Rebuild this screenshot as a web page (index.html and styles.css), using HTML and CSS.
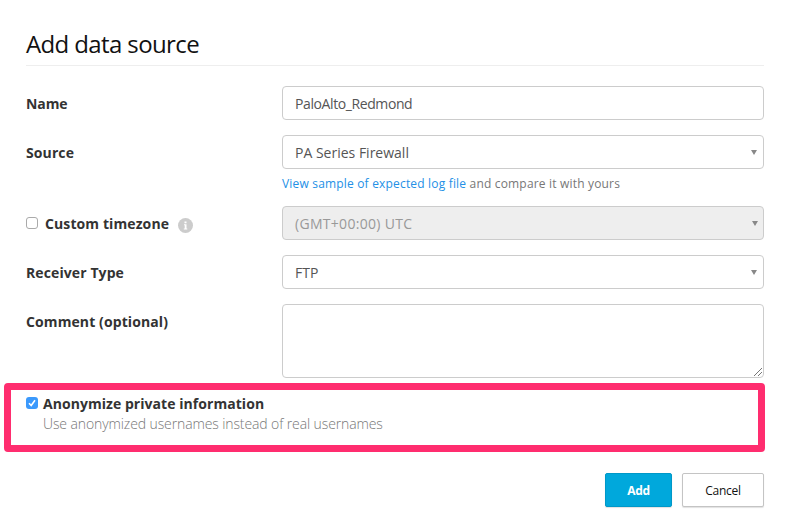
FILE: index.html
```html
<!DOCTYPE html>
<html lang="en">
<head>
<meta charset="utf-8">
<title>Add data source</title>
<link rel="stylesheet" href="styles.css">
</head>
<body>
<main class="dialog">
  <h1 class="title">Add data source</h1>
  <form class="form">
    <div class="row"><div class="label"><span class="w-name">Name</span></div><div class="control"><span class="w-palo">PaloAlto_Redmond</span></div></div>
    <div class="row source"><div class="label"><span>Source</span></div><div class="field"><div class="control"><span>PA Series Firewall</span><i class="arrow"></i></div><p class="hint"><a>View sample of expected log file</a> and compare it with yours</p></div></div>
    <div class="row"><div class="label"><i class="check"></i><span>Custom timezone</span><i class="info"><svg width="15" height="15"><path d="M6.5 3.5h2v1.7h-2zM6 6.3h2.5v4.2H9.3v1H5.8v-1h.9V7.3H6z" fill="#fff"/></svg></i></div><div class="control disabled"><span class="w-gmt">(GMT+00:00) UTC</span><i class="arrow"></i></div></div>
    <div class="row"><div class="label"><span>Receiver Type</span></div><div class="control"><span>FTP</span><i class="arrow"></i></div></div>
    <div class="row comment"><div class="label"><span>Comment (optional)</span></div><div class="control area"><svg class="grip" width="8" height="8"><path d="M0 8L8 0M4 8L8 4" stroke="#777"/></svg></div></div>
  </form>
  <section class="anonymize">
    <i class="check checked"><svg width="12" height="12"><path d="M3 6.2L5.2 8.5L9 3.2" fill="none" stroke="#fff" stroke-width="1.6"/></svg></i>
    <div><div class="anon-title">Anonymize private information</div><div class="anon-sub">Use anonymized usernames instead of real usernames</div></div>
  </section>
  <footer class="actions"><button class="btn primary">Add</button><button class="btn">Cancel</button></footer>
</main>
</body>
</html>
```
FILE: styles.css
```css
* { box-sizing: border-box; }
body { margin: 0; background: #fff; color: #333; font: 14px/20px "Open Sans", sans-serif; }
.dialog { width: 786px; height: 532px; padding-top: 27px; overflow: hidden; }
.title { margin: 0 22px 20px 26px; height: 39px; border-bottom: 1px solid #eee; color: #111; font-size: 24px; line-height: 34px; font-weight: 400; letter-spacing: -0.62px; white-space: nowrap; }
.form { margin: 0 22px 0 26px; }
.row { display: flex; height: 34px; margin-bottom: 15px; }
.row.source { height: 56px; }
.label { width: 256px; flex: none; height: 34px; display: flex; align-items: center; font-weight: 700; letter-spacing: 0.1px; white-space: nowrap; }
.label span, .control span { padding-top: 2px; }
.w-name { letter-spacing: -0.1px; }
.w-palo { letter-spacing: -0.4px; }
.w-gmt { letter-spacing: 0.3px; }
.field { flex: 1; }
.control { position: relative; flex: 1; height: 34px; border: 1px solid #ccc; border-radius: 4px; padding: 0 12px; display: flex; align-items: center; justify-content: space-between; white-space: nowrap; color: #555; }
.arrow { width: 0; height: 0; margin-right: -6px; border: 3.5px solid transparent; border-top: 5px solid #888; border-bottom: 0; }
.disabled { background: #eee; color: #999; }
.disabled .arrow { margin-right: -7px; }
.hint { margin: 5px 0 0; font-size: 12px; line-height: 20px; letter-spacing: 0.18px; color: #777; white-space: nowrap; }
.hint a { color: #2390e6; }
.check { width: 12px; height: 12px; flex: none; border: 1px solid #aaa; border-radius: 3px; margin-right: 7px; }
.info { width: 15px; height: 15px; margin: 4px 0 0 9px; border-radius: 50%; background: #ccc; }
.info svg { display: block; }
.row.comment { height: 74px; margin: 0; }
.area { height: 74px; }
.grip { position: absolute; right: 1px; bottom: 1px; }
.anonymize { width: 761px; height: 69px; margin: 5px 0 0 4px; border: 7px solid #ff2d6f; border-radius: 4px; padding: 4px 0 0 15px; display: flex; }
.checked { border: 0; background: #3b99fc; margin: 3px 5px 0 0; }
.checked svg { display: block; }
.anon-title { font-weight: 700; letter-spacing: 0.05px; white-space: nowrap; }
.anon-sub { color: #777; font-weight: 300; letter-spacing: -0.11px; white-space: nowrap; }
.actions { display: flex; justify-content: flex-end; gap: 10px; margin: 21px 22px 0 0; }
.btn { width: 82px; height: 34px; border: 1px solid #c4c4c4; border-radius: 2px; background: #fff; color: #111; font: 12px "Open Sans", sans-serif; letter-spacing: -0.3px; padding: 1px 0 0; box-shadow: 0 1px 1px rgba(0, 0, 0, 0.12); }
.primary { width: 67px; border-color: #0098c8; background: #00a8dc; color: #fff; font-weight: 700; }
```
